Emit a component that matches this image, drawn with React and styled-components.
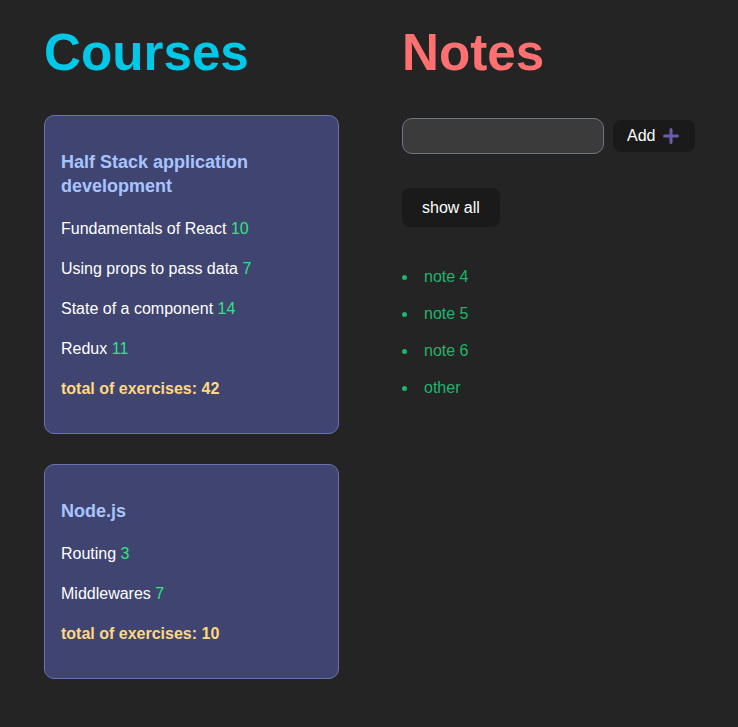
import React from 'react'
import styled, { createGlobalStyle } from 'styled-components'

const GlobalStyle = createGlobalStyle`
  html, body {
    margin: 0;
    padding: 0;
    background: #242424;
    font-family: "Liberation Sans", Arial, sans-serif;
    color: #ffffff;
  }
`;

const courses = [
  {
    id: 1,
    name: 'Half Stack application development',
    parts: [
      { name: 'Fundamentals of React', exercises: 10 },
      { name: 'Using props to pass data', exercises: 7 },
      { name: 'State of a component', exercises: 14 },
      { name: 'Redux', exercises: 11 },
    ],
  },
  {
    id: 2,
    name: 'Node.js',
    parts: [
      { name: 'Routing', exercises: 3 },
      { name: 'Middlewares', exercises: 7 },
    ],
  },
];

const notes = ['note 4', 'note 5', 'note 6', 'other'];

function Course({ course }) {
  const total = course.parts.reduce((s, p) => s + p.exercises, 0)
  return (
    <Card>
      <CourseTitle>{course.name}</CourseTitle>
      {course.parts.map((part) => (
        <Part key={part.name}>
          {part.name} <Count>{part.exercises}</Count>
        </Part>
      ))}
      <Total>total of exercises: {total}</Total>
    </Card>
  )
}

function PlusIcon() {
  return (
    <svg width="16" height="16" viewBox="0 0 16 16" fill="none">
      <path d="M8 1.5v13M1.5 8h13" stroke="#6b5ea8" strokeWidth="3" strokeLinecap="round" />
    </svg>
  )
}

export default function App() {
  return (
    <>
      <GlobalStyle />
      <Page>
        <section>
          <Heading color="#00c8e6">Courses</Heading>
          {courses.map((c) => <Course key={c.id} course={c} />)}
        </section>
        <section>
          <Heading color="#ff7070">Notes</Heading>
          <NoteForm onSubmit={(e) => e.preventDefault()}>
            <Input />
            <AddButton type="submit">Add <PlusIcon /></AddButton>
          </NoteForm>
          <ShowAll>show all</ShowAll>
          <NoteList>
            {notes.map((n) => (
              <NoteItem key={n}><Dot />{n}</NoteItem>
            ))}
          </NoteList>
        </section>
      </Page>
    </>
  )
}

const Page = styled.div`
  display: grid;
  grid-template-columns: 295px 1fr;
  column-gap: 63px;
  padding: 23px 44px 40px;
`;

const Heading = styled.h1`
  margin: 0 0 33px;
  font-size: 51.2px;
  line-height: 59px;
  font-weight: 700;
  color: ${(p) => p.color};
`;

const Card = styled.div`
  background: #3f4470;
  border: 1px solid #6b71b3;
  border-radius: 10px;
  padding: 16px;
  margin-bottom: 30px;
`;

const CourseTitle = styled.h3`
  margin: 18px 0 19px;
  font-size: 18px;
  line-height: 24px;
  font-weight: 700;
  color: #a8c4ff;
`;

const Part = styled.p`
  margin: 16px 0;
  font-size: 16px;
  line-height: 24px;
  color: #ffffff;
`;

const Count = styled.span`
  color: #2ee47f;
`;

const Total = styled(Part)`
  font-weight: 700;
  color: #ffd880;
`;

const NoteForm = styled.form`
  display: flex;
  align-items: center;
  gap: 9px;
  margin: 36px 0 34px;
`;

const Input = styled.input`
  box-sizing: border-box;
  width: 202px;
  height: 36px;
  background: #3b3b3b;
  border: 1px solid #6b7686;
  border-radius: 10px;
  color: #fff;
  font-size: 16px;
  padding: 0 10px;
  outline: none;
`;

const Button = styled.button`
  background: #1a1a1a;
  border: none;
  border-radius: 8px;
  color: #ffffff;
  font-family: "Liberation Sans", Arial, sans-serif;
  font-size: 16px;
  cursor: pointer;
`;

const AddButton = styled(Button)`
  display: flex;
  align-items: center;
  gap: 8px;
  height: 32px;
  padding: 0 16px 0 14px;
`;

const ShowAll = styled(Button)`
  height: 39px;
  padding: 0 20px;
`;

const NoteList = styled.ul`
  list-style: none;
  margin: 38px 0 0;
  padding: 0;
`;

const NoteItem = styled.li`
  display: flex;
  align-items: center;
  gap: 17px;
  height: 24px;
  margin-bottom: 13px;
  font-size: 16px;
  color: #1fb56c;
`;

const Dot = styled.span`
  width: 5px;
  height: 5px;
  border-radius: 50%;
  background: #1fb56c;
`;
